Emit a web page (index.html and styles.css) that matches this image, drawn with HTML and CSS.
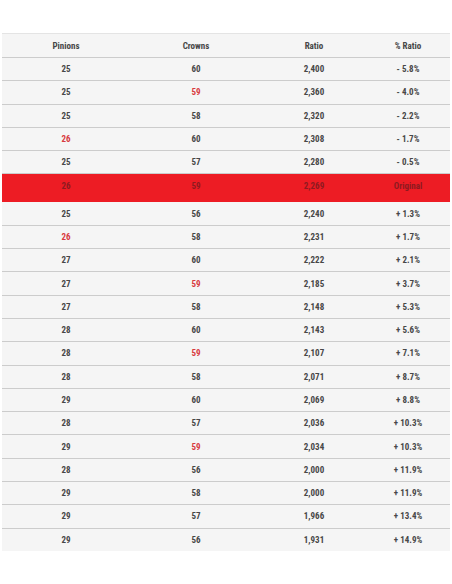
FILE: index.html
```html
<!DOCTYPE html>
<html>
<head>
<meta charset="utf-8">
<link rel="stylesheet" href="styles.css">
</head>
<body>
<table class="ratios">
  <colgroup>
    <col class="c1"><col class="c2"><col class="c3"><col class="c4">
  </colgroup>
  <thead>
    <tr><th>Pinions</th><th>Crowns</th><th>Ratio</th><th>% Ratio</th></tr>
  </thead>
  <tbody>
    <tr><td>25</td><td>60</td><td>2,400</td><td>- 5.8%</td></tr>
    <tr><td>25</td><td class="hl">59</td><td>2,360</td><td>- 4.0%</td></tr>
    <tr><td>25</td><td>58</td><td>2,320</td><td>- 2.2%</td></tr>
    <tr><td class="hl">26</td><td>60</td><td>2,308</td><td>- 1.7%</td></tr>
    <tr><td>25</td><td>57</td><td>2,280</td><td>- 0.5%</td></tr>
    <tr class="orig"><td>26</td><td>59</td><td>2,269</td><td>Original</td></tr>
    <tr><td>25</td><td>56</td><td>2,240</td><td>+ 1.3%</td></tr>
    <tr><td class="hl">26</td><td>58</td><td>2,231</td><td>+ 1.7%</td></tr>
    <tr><td>27</td><td>60</td><td>2,222</td><td>+ 2.1%</td></tr>
    <tr><td>27</td><td class="hl">59</td><td>2,185</td><td>+ 3.7%</td></tr>
    <tr><td>27</td><td>58</td><td>2,148</td><td>+ 5.3%</td></tr>
    <tr><td>28</td><td>60</td><td>2,143</td><td>+ 5.6%</td></tr>
    <tr><td>28</td><td class="hl">59</td><td>2,107</td><td>+ 7.1%</td></tr>
    <tr><td>28</td><td>58</td><td>2,071</td><td>+ 8.7%</td></tr>
    <tr><td>29</td><td>60</td><td>2,069</td><td>+ 8.8%</td></tr>
    <tr><td>28</td><td>57</td><td>2,036</td><td>+ 10.3%</td></tr>
    <tr><td>29</td><td class="hl">59</td><td>2,034</td><td>+ 10.3%</td></tr>
    <tr><td>28</td><td>56</td><td>2,000</td><td>+ 11.9%</td></tr>
    <tr><td>29</td><td>58</td><td>2,000</td><td>+ 11.9%</td></tr>
    <tr><td>29</td><td>57</td><td>1,966</td><td>+ 13.4%</td></tr>
    <tr class="last"><td>29</td><td>56</td><td>1,931</td><td>+ 14.9%</td></tr>
  </tbody>
</table>
</body>
</html>
```
FILE: styles.css
```css
html, body {
  margin: 0;
  background: #ffffff;
}
body {
  padding: 33px 2px 0 2px;
  font-family: "Roboto Condensed", "Liberation Sans Narrow", Roboto, sans-serif;
}
.ratios {
  width: 448px;
  border-collapse: collapse;
  table-layout: fixed;
  background: #f5f5f5;
  border-top: 1px solid #e4e4e4;
}
.c1 { width: 128px; }
.c2 { width: 132px; }
.c3 { width: 104px; }
.c4 { width: 84px; }
.ratios th,
.ratios td {
  padding: 0;
  text-align: center;
  font-size: 9px;
  font-weight: 700;
  color: #474747;
  border-bottom: 1px solid #cccccc;
}
.ratios th {
  height: 23px;
}
.ratios td {
  height: 22.3px;
}
.ratios td.hl {
  color: #d83a40;
}
.ratios tr.orig td {
  background: #ed1c24;
  color: #8e1a20;
  height: 24px;
  padding-bottom: 4px;
  border-bottom: none;
}
.ratios tr.last td {
  border-bottom: none;
}
```
